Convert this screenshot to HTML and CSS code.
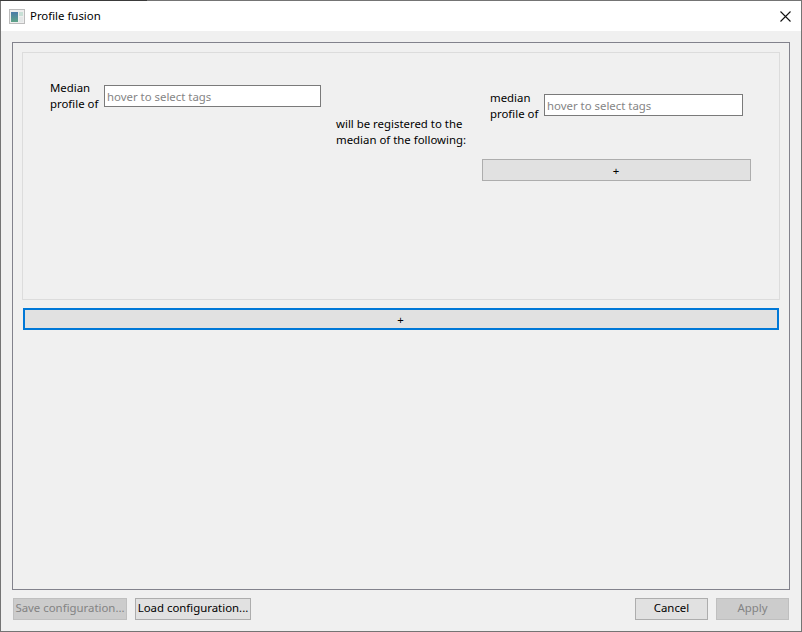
FILE: index.html
```html
<!DOCTYPE html>
<html lang="en">
<head>
<meta charset="utf-8">
<title>Profile fusion</title>
<link rel="stylesheet" href="styles.css">
</head>
<body>
<div class="window">
  <header class="titlebar">
    <svg class="app-icon" width="16" height="15" viewBox="0 0 16 15">
      <defs>
        <linearGradient id="pane" x1="0" y1="0" x2="0" y2="1">
          <stop offset="0" stop-color="#4a7aa8"/>
          <stop offset="1" stop-color="#5fa488"/>
        </linearGradient>
      </defs>
      <rect x="0.5" y="0.5" width="15" height="14" fill="#eeeeee" stroke="#bcbcbc"/>
      <rect x="2" y="3" width="7" height="10" fill="url(#pane)"/>
      <rect x="10" y="3" width="4" height="4" fill="#c8e0d6"/>
      <rect x="10" y="8" width="4" height="5" fill="#e4e7e7"/>
    </svg>
    <span class="title">Profile fusion</span>
    <svg class="close" width="11" height="11" viewBox="0 0 11 11">
      <path d="M0.5 0.5L10.5 10.5M10.5 0.5L0.5 10.5" stroke="#111" stroke-width="1.1" fill="none"/>
    </svg>
  </header>
  <main class="body">
    <section class="frame">
      <div class="group">
        <div class="col col-left">
          <label class="label">Median<br>profile of</label>
          <div class="input input-left">hover to select tags</div>
        </div>
        <div class="col col-mid">will be registered to the<br>median of the following:</div>
        <div class="col col-right">
          <div class="field">
            <label class="label">median<br>profile of</label>
            <div class="input input-right">hover to select tags</div>
          </div>
          <button class="btn btn-add">+</button>
        </div>
      </div>
      <button class="btn btn-main">+</button>
    </section>
    <footer class="footer">
      <button class="btn btn-save" disabled>Save configuration...</button>
      <button class="btn btn-load">Load configuration...</button>
      <span class="spacer"></span>
      <button class="btn btn-cancel">Cancel</button>
      <button class="btn btn-apply" disabled>Apply</button>
    </footer>
  </main>
</div>
</body>
</html>
```
FILE: styles.css
```css
* { box-sizing: border-box; }
html, body { margin: 0; padding: 0; }
body {
  width: 802px;
  height: 632px;
  overflow: hidden;
  font-family: "Noto Sans", "Open Sans", sans-serif;
  font-size: 11.4px;
  line-height: 16px;
  color: #000;
}
.window {
  position: relative;
  width: 802px;
  height: 632px;
  border: 1px solid #747474;
  background: #f0f0f0;
  display: flex;
  flex-direction: column;
}
.window::before {
  content: "";
  position: absolute;
  left: -1px;
  top: -1px;
  width: 147px;
  height: 1px;
  background: #3a3a3a;
}
.titlebar {
  height: 30px;
  flex: none;
  background: #fff;
  display: flex;
  align-items: center;
  padding-left: 8px;
  padding-right: 10px;
}
.app-icon { flex: none; }
.title { margin-left: 5px; flex: 1; }
.close { flex: none; }
.body {
  flex: 1;
  display: flex;
  flex-direction: column;
  padding: 11px 11px 11px 11px;
}
.frame {
  width: 778px;
  height: 548px;
  border: 1px solid #82828c;
  padding: 9px;
}
.group {
  width: 758px;
  height: 248px;
  border: 1px solid #dcdcdc;
  display: flex;
  align-items: flex-start;
}
.col { flex: none; }
.col-left {
  width: 271px;
  margin-left: 27px;
  margin-top: 27px;
  display: flex;
  align-items: flex-start;
}
.col-mid {
  width: 146px;
  margin-left: 15px;
  margin-top: 63px;
}
.col-right {
  width: 269px;
  margin-top: 37px;
}
.field {
  display: flex;
  align-items: flex-start;
  padding-left: 8px;
}
.label { width: 54px; flex: none; }
.input {
  width: 217px;
  height: 22px;
  border: 1px solid #7a7a7a;
  background: #fff;
  color: #858585;
  padding-left: 2px;
  padding-top: 1px;
  line-height: 20px;
}
.input-left { margin-top: 5px; }
.input-right { width: 199px; margin-top: 4px; }
.btn {
  display: block;
  height: 22px;
  padding: 1px 1px 0 0;
  border: 1px solid #adadad;
  background: #e1e1e1;
  color: #000;
  font: inherit;
  line-height: 20px;
  text-align: center;
  white-space: nowrap;
}
.btn:disabled {
  background: #cccccc;
  border-color: #bfbfbf;
  color: #838383;
}
.btn-add { width: 269px; margin-top: 37px; }
.btn-main {
  width: 756px;
  margin: 8px 1px 0;
  border: 2px solid #0078d7;
  line-height: 18px;
}
.footer {
  flex: none;
  display: flex;
  margin-top: 8px;
  padding-left: 1px;
  padding-right: 1px;
}
.footer .btn { padding: 0 0 2px; line-height: 18px; }
.btn-save { width: 114px; }
.btn-load { width: 116px; margin-left: 8px; }
.spacer { flex: 1; }
.btn-cancel { width: 73px; }
.btn-apply { width: 73px; margin-left: 8px; }
```
